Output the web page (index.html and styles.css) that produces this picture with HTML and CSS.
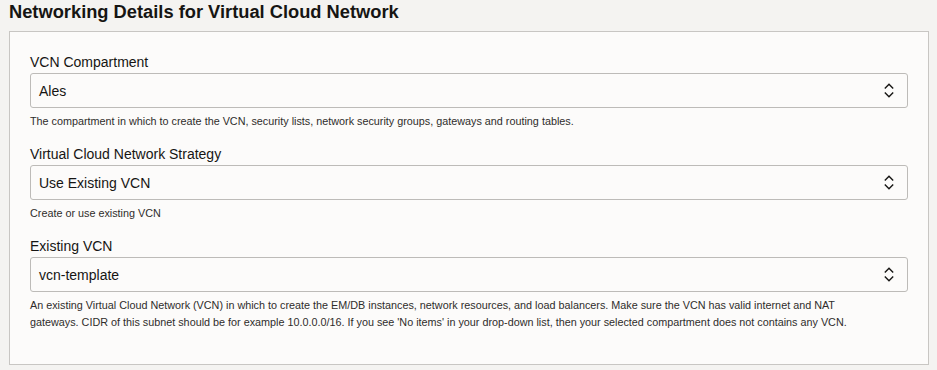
FILE: index.html
```html
<!DOCTYPE html>
<html>
<head>
<meta charset="UTF-8">
<link rel="stylesheet" href="styles.css">
</head>
<body>

<h2 class="section-title">Networking Details for Virtual Cloud Network</h2>

<div class="panel">
  <!--Compartment-->
  <div class="field">
    <label class="field-label">VCN Compartment</label>
    <div class="select">
      <span class="select-value">Ales</span>
      <svg class="select-arrows" width="10" height="15" viewBox="0 0 10 15"><polyline points="0.8,5.5 5,1.3 9.2,5.5"/><polyline points="0.8,9.5 5,13.7 9.2,9.5"/></svg>
    </div>
    <p class="field-help">The compartment in which to create the VCN, security lists, network security groups, gateways and routing tables.</p>
  </div>

  <!--Strategy-->
  <div class="field">
    <label class="field-label">Virtual Cloud Network Strategy</label>
    <div class="select">
      <span class="select-value">Use Existing VCN</span>
      <svg class="select-arrows" width="10" height="15" viewBox="0 0 10 15"><polyline points="0.8,5.5 5,1.3 9.2,5.5"/><polyline points="0.8,9.5 5,13.7 9.2,9.5"/></svg>
    </div>
    <p class="field-help">Create or use existing VCN</p>
  </div>

  <!--Existing VCN-->
  <div class="field">
    <label class="field-label">Existing VCN</label>
    <div class="select">
      <span class="select-value">vcn-template</span>
      <svg class="select-arrows" width="10" height="15" viewBox="0 0 10 15"><polyline points="0.8,5.5 5,1.3 9.2,5.5"/><polyline points="0.8,9.5 5,13.7 9.2,9.5"/></svg>
    </div>
    <p class="field-help">An existing Virtual Cloud Network (VCN) in which to create the EM/DB instances, network resources, and load balancers. Make sure the VCN has valid internet and NAT gateways. CIDR of this subnet should be for example 10.0.0.0/16. If you see 'No items' in your drop-down list, then your selected compartment does not contains any VCN.</p>
  </div>
</div>

</body>
</html>
```

FILE: styles.css
```css
* {
  padding: 0;
  margin: 0;
  box-sizing: border-box;
}

body {
  background: #f4f3f1;
  font-family: "Liberation Sans", Arial, sans-serif;
  color: #161513;
  padding: 2px 9px 0 9px;
}

.section-title {
  font-size: 18.3px;
  font-weight: bold;
  line-height: 19px;
  height: 29px;
}

.panel {
  width: 920px;
  background: #fcfbfa;
  border: 1px solid #c8c6c3;
  padding: 20px 20px 33px 20px;
}

.field {
  margin-bottom: 14px;
}

.field:last-child {
  margin-bottom: 0;
}

.field-label {
  display: block;
  font-size: 14px;
  line-height: 20px;
  margin-bottom: 1px;
}

.select {
  height: 35px;
  display: flex;
  align-items: center;
  justify-content: space-between;
  border: 1px solid #bdbbb8;
  border-radius: 3px;
  background: #fcfbfa;
  padding: 0 13px 0 8px;
}

.select-value {
  font-size: 14px;
}

.select-arrows {
  fill: none;
  stroke: #161513;
  stroke-width: 1.4;
}

.field-help {
  max-width: 850px;
  font-size: 10.8px;
  line-height: 17px;
  margin-top: 5px;
  color: #2f2d2b;
}
```
